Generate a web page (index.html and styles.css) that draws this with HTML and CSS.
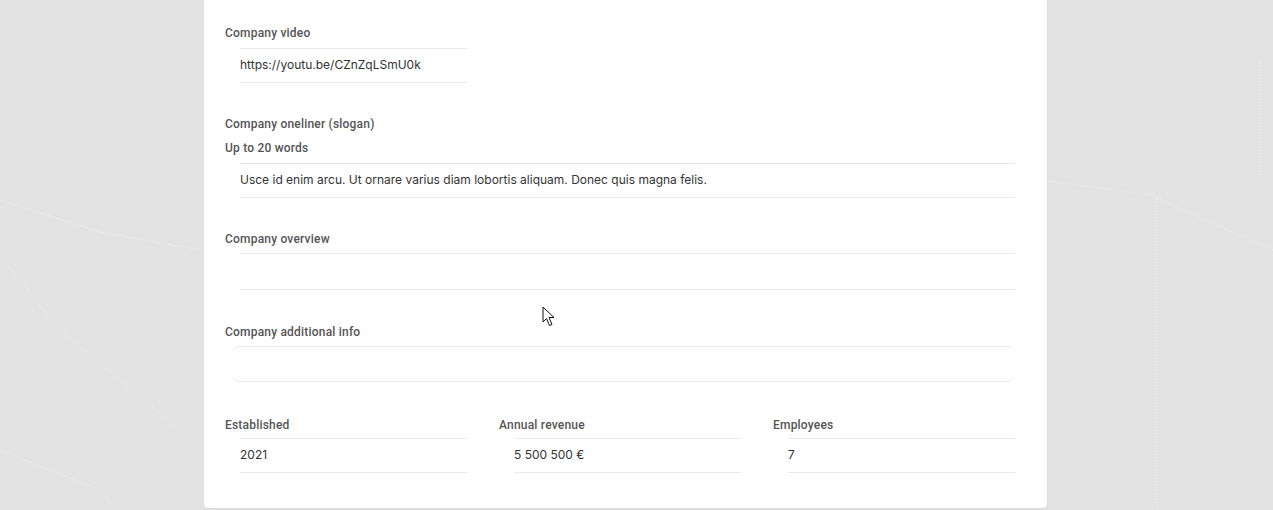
FILE: index.html
```html
<!DOCTYPE html>
<html lang="en">
<head>
  <meta charset="UTF-8" />
  <meta name="viewport" content="width=device-width, initial-scale=1.0"/>
  <title>Company profile</title>
  <link rel="stylesheet" href="styles.css">
</head>
<body>
  <svg class="bg-lines" width="1273" height="510" viewBox="0 0 1273 510">
    <polyline points="0,200 100,232 200,250" />
    <polyline points="0,255 60,330 180,430" />
    <polyline points="0,450 100,490 115,510" />
    <polyline points="1048,181 1150,195 1273,250" />
    <polyline points="1157,196 1157,510" />
    <polyline points="1261,60 1261,180" />
  </svg>

  <div id="profile-card">
    <div class="field">
      <label class="field-label">Company video</label>
      <div class="field-input half">https://youtu.be/CZnZqLSmU0k</div>
    </div>

    <div class="field">
      <label class="field-label">Company oneliner (slogan)</label>
      <div class="field-hint">Up to 20 words</div>
      <div class="field-input">Usce id enim arcu. Ut ornare varius diam lobortis aliquam. Donec quis magna felis.</div>
    </div>

    <div class="field field-text">
      <label class="field-label">Company overview</label>
      <div class="field-input tall"></div>
    </div>

    <div class="field field-text last">
      <label class="field-label">Company additional info</label>
      <div class="field-input tall wide"></div>
    </div>

    <div class="field-row">
      <div class="field">
        <label class="field-label">Established</label>
        <div class="field-input">2021</div>
      </div>
      <div class="field">
        <label class="field-label">Annual revenue</label>
        <div class="field-input">5 500 500 €</div>
      </div>
      <div class="field">
        <label class="field-label">Employees</label>
        <div class="field-input">7</div>
      </div>
    </div>
  </div>

  <!-- mouse pointer from the capture -->
  <svg class="cursor" width="14" height="21" viewBox="0 0 14 21">
    <path d="M1 1 L1 16 L4.5 12.5 L7.5 19.5 L10 18.5 L7 11.5 L12 11.5 Z" />
  </svg>
</body>
</html>
```

FILE: styles.css
```css
body {
  margin: 0;
  height: 510px;
  overflow: hidden;
  background-color: #e3e3e3;
  font-family: Roboto, "Liberation Sans", sans-serif;
  position: relative;
}

.bg-lines {
  position: absolute;
  left: 0;
  top: 0;
}

.bg-lines polyline {
  fill: none;
  stroke: #f4f4f4;
  stroke-width: 1;
  stroke-dasharray: 1 2;
}

#profile-card {
  position: relative;
  background: white;
  width: 843px;
  box-sizing: border-box;
  margin-left: 204px;
  padding: 25px 25px 35px 21px;
  border-radius: 0 0 4px 4px;
  box-shadow: 0 1px 2px rgba(0,0,0,0.06);
}

.field {
  margin-bottom: 33px;
}

.field.field-text {
  margin-bottom: 34px;
}

.field.field-text.last {
  margin-bottom: 35px;
}

.field-label,
.field-hint {
  display: block;
  font-size: 12px;
  line-height: 16px;
  font-weight: 500;
  color: #555;
  letter-spacing: 0.2px;
}

.field-hint {
  margin-top: 8px;
}

.field-input {
  margin: 7px 7px 0 15px;
  height: 32px;
  padding-bottom: 1px;
  border-top: 1px solid #e9e9e9;
  border-bottom: 1px solid #e9e9e9;
  font-family: Inter, "Liberation Sans", sans-serif;
  font-size: 12px;
  line-height: 32px;
  color: #333;
  white-space: nowrap;
}

.field-input.half {
  width: 227px;
}

.field-input.tall {
  margin-top: 6px;
  height: 35px;
  padding-bottom: 0;
}

.field-input.wide {
  height: 34px;
  margin-left: 7px;
  border-radius: 8px;
}

.field-row {
  display: grid;
  grid-template-columns: repeat(3, 1fr);
  column-gap: 25px;
}

.field-row .field {
  margin-bottom: 0;
}

.field-row .field-input {
  margin-top: 5px;
}

.cursor {
  position: absolute;
  left: 542px;
  top: 306px;
}

.cursor path {
  fill: white;
  stroke: #111;
  stroke-width: 1;
  stroke-linejoin: miter;
}
```
